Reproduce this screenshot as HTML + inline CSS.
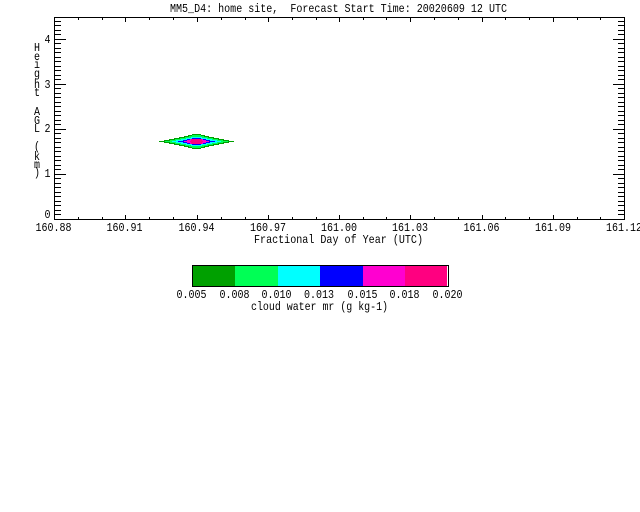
<!DOCTYPE html>
<html>
<head>
<meta charset="utf-8">
<style>
html,body{margin:0;padding:0;background:#fff;width:640px;height:512px;overflow:hidden}
svg{display:block}
text{font-family:"Liberation Mono",monospace;font-size:12px;fill:#000}
.m{text-anchor:middle}
</style>
</head>
<body>
<svg width="640" height="512" viewBox="0 0 640 512">
<rect width="640" height="512" fill="#fff"/>
<g shape-rendering="crispEdges">
<path fill="#00a000" d="M159 141h75v1h-75zM164 140h65v3h-65zM169 139h55v5h-55zM174 138h45v7h-45zM179 137h35v9h-35zM184 136h25v11h-25zM188 135h17v13h-17zM192 134h9v15h-9z"/>
<path fill="#00ff55" d="M165 141h63v1h-63zM170 140h53v3h-53zM175 139h43v5h-43zM180 138h33v7h-33zM185 137h23v9h-23zM189 136h15v11h-15zM192 135h9v13h-9z"/>
<path fill="#00ffff" d="M172 141h49v1h-49zM176 140h41v3h-41zM181 139h31v5h-31zM186 138h21v7h-21zM191 137h11v9h-11z"/>
<path fill="#0000ff" d="M178 141h37v1h-37zM183 140h27v3h-27zM187 139h19v5h-19zM192 138h9v7h-9z"/>
<path fill="#ff00d0" d="M184 141h25v1h-25zM187 140h19v3h-19zM190 139h13v5h-13z"/>
<path fill="#ff0080" d="M190 141h13v1h-13zM191 139h11v5h-11z"/>

<rect x="192" y="265" width="43" height="22" fill="#00a000"/>
<rect x="235" y="265" width="43" height="22" fill="#00ff55"/>
<rect x="278" y="265" width="42" height="22" fill="#00ffff"/>
<rect x="320" y="265" width="43" height="22" fill="#0000ff"/>
<rect x="363" y="265" width="42" height="22" fill="#ff00d0"/>
<rect x="405" y="265" width="42" height="22" fill="#ff0080"/>
<path d="M192.5 265.5H448.5V286.5H192.5Z" fill="none" stroke="#000"/>

<path fill="none" stroke="#000" d="M54.5 17.5H624.5V219.5H54.5Z
M125.5 17V22M197.5 17V22M268.5 17V22M339.5 17V22M410.5 17V22M482.5 17V22M553.5 17V22
M125.5 220V215M197.5 220V215M268.5 220V215M339.5 220V215M410.5 220V215M482.5 220V215M553.5 220V215
M78.5 17V20M102.5 17V20M149.5 17V20M173.5 17V20M221.5 17V20M245.5 17V20M292.5 17V20M316.5 17V20M363.5 17V20M386.5 17V20M434.5 17V20M458.5 17V20M505.5 17V20M529.5 17V20M577.5 17V20M600.5 17V20
M78.5 220V217M102.5 220V217M149.5 220V217M173.5 220V217M221.5 220V217M245.5 220V217M292.5 220V217M316.5 220V217M363.5 220V217M386.5 220V217M434.5 220V217M458.5 220V217M505.5 220V217M529.5 220V217M577.5 220V217M600.5 220V217
M54 174.5H66M54 129.5H66M54 84.5H66M54 39.5H66
M625 174.5H613M625 129.5H613M625 84.5H613M625 39.5H613
M54 214.5H61M54 210.5H61M54 205.5H61M54 201.5H61M54 196.5H61M54 192.5H61M54 187.5H61M54 183.5H61M54 178.5H61
M54 169.5H61M54 165.5H61M54 160.5H61M54 156.5H61M54 151.5H61M54 147.5H61M54 142.5H61M54 138.5H61M54 133.5H61
M54 124.5H61M54 120.5H61M54 115.5H61M54 111.5H61M54 106.5H61M54 102.5H61M54 97.5H61M54 93.5H61M54 88.5H61
M54 79.5H61M54 75.5H61M54 70.5H61M54 66.5H61M54 61.5H61M54 57.5H61M54 52.5H61M54 48.5H61M54 43.5H61
M54 34.5H61M54 30.5H61M54 25.5H61M54 21.5H61
M625 214.5H618M625 210.5H618M625 205.5H618M625 201.5H618M625 196.5H618M625 192.5H618M625 187.5H618M625 183.5H618M625 178.5H618
M625 169.5H618M625 165.5H618M625 160.5H618M625 156.5H618M625 151.5H618M625 147.5H618M625 142.5H618M625 138.5H618M625 133.5H618
M625 124.5H618M625 120.5H618M625 115.5H618M625 111.5H618M625 106.5H618M625 102.5H618M625 97.5H618M625 93.5H618M625 88.5H618
M625 79.5H618M625 75.5H618M625 70.5H618M625 66.5H618M625 61.5H618M625 57.5H618M625 52.5H618M625 48.5H618M625 43.5H618
M625 34.5H618M625 30.5H618M625 25.5H618M625 21.5H618"/>
</g>

<text x="170" y="12" textLength="337" lengthAdjust="spacingAndGlyphs" xml:space="preserve">MM5_D4: home site,  Forecast Start Time: 20020609 12 UTC</text>

<text class="m" x="53.5" y="231" textLength="36" lengthAdjust="spacingAndGlyphs">160.88</text>
<text class="m" x="124.5" y="231" textLength="36" lengthAdjust="spacingAndGlyphs">160.91</text>
<text class="m" x="196.5" y="231" textLength="36" lengthAdjust="spacingAndGlyphs">160.94</text>
<text class="m" x="268" y="231" textLength="36" lengthAdjust="spacingAndGlyphs">160.97</text>
<text class="m" x="339" y="231" textLength="36" lengthAdjust="spacingAndGlyphs">161.00</text>
<text class="m" x="410" y="231" textLength="36" lengthAdjust="spacingAndGlyphs">161.03</text>
<text class="m" x="481.5" y="231" textLength="36" lengthAdjust="spacingAndGlyphs">161.06</text>
<text class="m" x="553" y="231" textLength="36" lengthAdjust="spacingAndGlyphs">161.09</text>
<text class="m" x="624" y="231" textLength="36" lengthAdjust="spacingAndGlyphs">161.12</text>

<text x="254" y="243" textLength="169" lengthAdjust="spacingAndGlyphs">Fractional Day of Year (UTC)</text>

<text class="m" x="47.5" y="43" textLength="6" lengthAdjust="spacingAndGlyphs">4</text>
<text class="m" x="47.5" y="88" textLength="6" lengthAdjust="spacingAndGlyphs">3</text>
<text class="m" x="47.5" y="132" textLength="6" lengthAdjust="spacingAndGlyphs">2</text>
<text class="m" x="47.5" y="177" textLength="6" lengthAdjust="spacingAndGlyphs">1</text>
<text class="m" x="47.5" y="218" textLength="6" lengthAdjust="spacingAndGlyphs">0</text>

<text class="m" x="37" y="51" textLength="6" lengthAdjust="spacingAndGlyphs">H</text>
<text class="m" x="37" y="60" textLength="6" lengthAdjust="spacingAndGlyphs">e</text>
<text class="m" x="37" y="68" textLength="6" lengthAdjust="spacingAndGlyphs">i</text>
<text class="m" x="37" y="77" textLength="6" lengthAdjust="spacingAndGlyphs">g</text>
<text class="m" x="37" y="88" textLength="6" lengthAdjust="spacingAndGlyphs">h</text>
<text class="m" x="37" y="96" textLength="6" lengthAdjust="spacingAndGlyphs">t</text>
<text class="m" x="37" y="115" textLength="6" lengthAdjust="spacingAndGlyphs">A</text>
<text class="m" x="37" y="124" textLength="6" lengthAdjust="spacingAndGlyphs">G</text>
<text class="m" x="37" y="132" textLength="6" lengthAdjust="spacingAndGlyphs">L</text>
<text class="m" x="37" y="150" textLength="6" lengthAdjust="spacingAndGlyphs">(</text>
<text class="m" x="37" y="160" textLength="6" lengthAdjust="spacingAndGlyphs">k</text>
<text class="m" x="37" y="168" textLength="6" lengthAdjust="spacingAndGlyphs">m</text>
<text class="m" x="37" y="176" textLength="6" lengthAdjust="spacingAndGlyphs">)</text>

<text class="m" x="191.5" y="298" textLength="30" lengthAdjust="spacingAndGlyphs">0.005</text>
<text class="m" x="234.5" y="298" textLength="30" lengthAdjust="spacingAndGlyphs">0.008</text>
<text class="m" x="276.5" y="298" textLength="30" lengthAdjust="spacingAndGlyphs">0.010</text>
<text class="m" x="319" y="298" textLength="30" lengthAdjust="spacingAndGlyphs">0.013</text>
<text class="m" x="362.5" y="298" textLength="30" lengthAdjust="spacingAndGlyphs">0.015</text>
<text class="m" x="404.5" y="298" textLength="30" lengthAdjust="spacingAndGlyphs">0.018</text>
<text class="m" x="447.5" y="298" textLength="30" lengthAdjust="spacingAndGlyphs">0.020</text>
<text x="251" y="310" textLength="137" lengthAdjust="spacingAndGlyphs">cloud water mr (g kg-1)</text>
</svg>
</body>
</html>
